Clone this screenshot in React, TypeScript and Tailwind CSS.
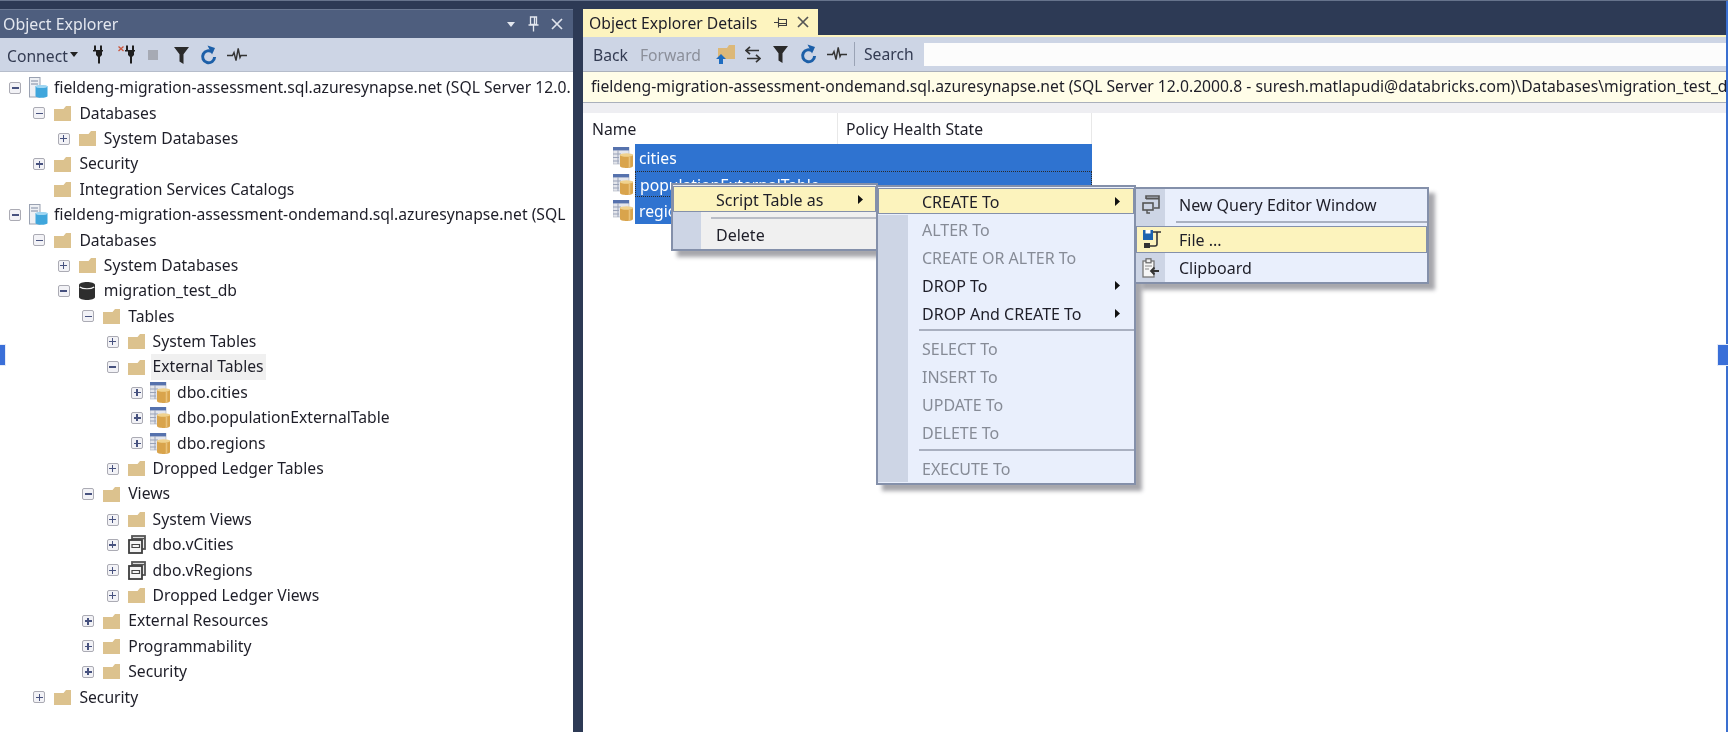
import type { ReactNode } from "react";

type TreeRow = {
  level: number;
  label: string;
  icon: "server" | "folder" | "db" | "table" | "view";
  box?: "plus" | "minus";
  hover?: boolean;
};

const TREE: TreeRow[] = [
  { level: 0, label: "fieldeng-migration-assessment.sql.azuresynapse.net (SQL Server 12.0.", icon: "server", box: "minus" },
  { level: 1, label: "Databases", icon: "folder", box: "minus" },
  { level: 2, label: "System Databases", icon: "folder", box: "plus" },
  { level: 1, label: "Security", icon: "folder", box: "plus" },
  { level: 1, label: "Integration Services Catalogs", icon: "folder" },
  { level: 0, label: "fieldeng-migration-assessment-ondemand.sql.azuresynapse.net (SQL", icon: "server", box: "minus" },
  { level: 1, label: "Databases", icon: "folder", box: "minus" },
  { level: 2, label: "System Databases", icon: "folder", box: "plus" },
  { level: 2, label: "migration_test_db", icon: "db", box: "minus" },
  { level: 3, label: "Tables", icon: "folder", box: "minus" },
  { level: 4, label: "System Tables", icon: "folder", box: "plus" },
  { level: 4, label: "External Tables", icon: "folder", box: "minus", hover: true },
  { level: 5, label: "dbo.cities", icon: "table", box: "plus" },
  { level: 5, label: "dbo.populationExternalTable", icon: "table", box: "plus" },
  { level: 5, label: "dbo.regions", icon: "table", box: "plus" },
  { level: 4, label: "Dropped Ledger Tables", icon: "folder", box: "plus" },
  { level: 3, label: "Views", icon: "folder", box: "minus" },
  { level: 4, label: "System Views", icon: "folder", box: "plus" },
  { level: 4, label: "dbo.vCities", icon: "view", box: "plus" },
  { level: 4, label: "dbo.vRegions", icon: "view", box: "plus" },
  { level: 4, label: "Dropped Ledger Views", icon: "folder", box: "plus" },
  { level: 3, label: "External Resources", icon: "folder", box: "plus" },
  { level: 3, label: "Programmability", icon: "folder", box: "plus" },
  { level: 3, label: "Security", icon: "folder", box: "plus" },
  { level: 1, label: "Security", icon: "folder", box: "plus" },
];

function FolderIcon() {
  return (
    <svg width="17" height="15" viewBox="0 0 17 15" className="shrink-0">
      <path d="M0 3h9.5L12 0h5v15H0z" fill="#dcc28e" />
    </svg>
  );
}

function TableIcon() {
  return (
    <svg width="20" height="21" viewBox="0 0 20 21" className="shrink-0">
      <rect x="0" y="0" width="16" height="17" fill="#e4e6ec" stroke="#a9afbd" strokeWidth="0.6" />
      <rect x="0" y="0" width="16" height="3.4" fill="#5672ad" />
      <path d="M0 7h8M0 10.5h6M0 14h6M5 3v14" stroke="#9aa3b8" strokeWidth="1" />
      <path d="M7 8c0-1.5 13-1.5 13 0v11c0 2.6-13 2.6-13 0z" fill="#d9a44c" />
      <ellipse cx="13.5" cy="8" rx="6.5" ry="1.8" fill="#f0d28e" />
      <path d="M16.5 10v10" stroke="#eac27a" strokeWidth="1.6" />
    </svg>
  );
}

function ServerIcon() {
  return (
    <svg width="19" height="21" viewBox="0 0 19 21" className="shrink-0">
      <rect x="0.5" y="0.5" width="10.5" height="19.5" fill="#eef0f4" stroke="#9aa2b2" />
      <path d="M2 4h7M2 7h7" stroke="#7f8aa2" strokeWidth="1.2" />
      <path d="M6.5 9.5c0-1.4 12-1.4 12 0V19c0 2.4-12 2.4-12 0z" fill="#3fa6dc" />
      <ellipse cx="12.5" cy="9.5" rx="6" ry="1.6" fill="#9fd6f2" />
    </svg>
  );
}

function DbIcon() {
  return (
    <svg width="16" height="18" viewBox="0 0 16 18" className="shrink-0">
      <path d="M0 3c0-4 16-4 16 0v12c0 4-16 4-16 0z" fill="#2e2e2e" />
      <path d="M0.8 5c3 2.4 11.4 2.4 14.4 0" stroke="#f4f4f4" strokeWidth="1.1" fill="none" />
    </svg>
  );
}

function ViewIcon() {
  return (
    <svg width="18" height="19" viewBox="0 0 18 19" className="shrink-0">
      <rect x="4" y="1" width="13" height="13" fill="#ececec" stroke="#555" strokeWidth="1.8" />
      <path d="M4 3.6h13" stroke="#555" strokeWidth="1.4" />
      <rect x="1" y="5" width="13" height="13" fill="#f4f4f4" stroke="#3d3d3d" strokeWidth="1.8" />
      <path d="M4 9.5h7.5v3H4z" fill="none" stroke="#444" strokeWidth="1.2" />
    </svg>
  );
}

function ExpandBox({ kind }: { kind?: "plus" | "minus" }) {
  if (!kind) return <span className="w-3 h-3 shrink-0" />;
  return (
    <span className="w-3 h-3 shrink-0 rounded-[2px] border border-[#ababb4] bg-[#f2f2f6] flex items-center justify-center relative">
      <span className="w-[7px] h-[1.4px] bg-[#47527f]" />
      {kind === "plus" && <span className="absolute w-[1.4px] h-[7px] bg-[#47527f]" />}
    </span>
  );
}

function TreeIcon({ icon }: { icon: TreeRow["icon"] }) {
  if (icon === "server") return <ServerIcon />;
  if (icon === "db") return <DbIcon />;
  if (icon === "table") return <span className="-ml-[2px]"><TableIcon /></span>;
  if (icon === "view") return <ViewIcon />;
  return <FolderIcon />;
}

function Plug({ x }: { x?: boolean }) {
  return (
    <svg width="20" height="19" viewBox="0 0 20 19" className="shrink-0">
      {x && <path d="M0.5 1.5l5 4.5M5.5 1.5l-5 4.5" stroke="#c9573f" strokeWidth="1.4" />}
      <path d="M9 0.5v5M15 0.5v5" stroke="#1e1e1e" strokeWidth="2" />
      <path d="M7 5h10v1.6h-1V10l-2 2v6.5h-2V12l-2-2V6.6H7z" fill="#1e1e1e" />
    </svg>
  );
}

function Filter() {
  return (
    <svg width="15" height="18" viewBox="0 0 15 18" className="shrink-0">
      <path d="M0 1h15L9.5 8.2V18L5.5 15.6V8.2z" fill="#2a2a2a" />
    </svg>
  );
}

function Refresh() {
  return (
    <svg width="17" height="20" viewBox="0 0 17 20" className="shrink-0">
      <path d="M12.5 7.2A6 6 0 1 0 14.6 12" fill="none" stroke="#1c5fa8" strokeWidth="3" />
      <path d="M7.5 0.5l7.5 2.5-3 6.5z" fill="#1c5fa8" />
    </svg>
  );
}

function Pulse() {
  return (
    <svg width="20" height="16" viewBox="0 0 20 16" className="shrink-0">
      <path d="M0 8.5h5.5l1.5-3 2 8 2.2-12 1.8 9 1-2H20" fill="none" stroke="#333" strokeWidth="1.4" />
    </svg>
  );
}

function FolderUp() {
  return (
    <svg width="19" height="19" viewBox="0 0 19 19" className="shrink-0">
      <path d="M2 3h9l2-3h6v14H2z" fill="#dcb878" />
      <path d="M5 9l5 5H7v5H3v-5H0z" fill="#1d6cc0" />
    </svg>
  );
}

function Swap() {
  return (
    <svg width="16" height="17" viewBox="0 0 16 17" className="shrink-0">
      <path d="M1 4.5h13M5 0.8L1 4.5l4 3.7M15 12.5H2M11 8.8l4 3.7-4 3.7" fill="none" stroke="#333" strokeWidth="1.7" />
    </svg>
  );
}

function Caret({ className }: { className?: string }) {
  return (
    <svg width="8" height="5" viewBox="0 0 8 5" className={className}>
      <path d="M0 0h8L4 5z" fill="currentColor" />
    </svg>
  );
}

function PinIcon({ color }: { color: string }) {
  return (
    <svg width="11" height="16" viewBox="0 0 11 16" className="shrink-0">
      <path d="M2.5 1h6v7.5h-6zM6.5 1v7.5M0.5 9h10M5.5 9v6.5" fill="none" stroke={color} strokeWidth="1.3" />
    </svg>
  );
}

function SidePin() {
  return (
    <svg width="13" height="11" viewBox="0 0 13 11" className="shrink-0">
      <path d="M4.5 2.5h8v6h-8zM4.5 6.5h8M4.5 0.5v10M0 5.5h4.5" fill="none" stroke="#3f3f3f" strokeWidth="1.1" />
    </svg>
  );
}

function CloseX({ color }: { color: string }) {
  return (
    <svg width="12" height="12" viewBox="0 0 12 12" className="shrink-0">
      <path d="M1 1l10 10M11 1L1 11" stroke={color} strokeWidth="1.7" />
    </svg>
  );
}

function MenuArrow() {
  return (
    <svg width="5" height="9" viewBox="0 0 5 9" className="shrink-0">
      <path d="M0 0l5 4.5L0 9z" fill="#111" />
    </svg>
  );
}

function QueryIcon() {
  return (
    <svg width="18" height="19" viewBox="0 0 18 19">
      <path d="M4 4V1h13v12h-5" fill="none" stroke="#555" strokeWidth="1.6" />
      <path d="M4 3.5h13" stroke="#555" strokeWidth="2" />
      <rect x="1" y="8" width="10" height="7" fill="none" stroke="#555" strokeWidth="1.6" />
      <path d="M5 15v3h3" fill="none" stroke="#555" strokeWidth="1.4" />
    </svg>
  );
}

function FileIcon() {
  return (
    <svg width="18" height="19" viewBox="0 0 18 19">
      <rect x="0" y="0" width="10" height="10" fill="#1d63b0" />
      <rect x="2.5" y="0" width="5" height="3.5" fill="#fff" />
      <path d="M10 2h8M14 2v12q0 2-2 2H6" fill="none" stroke="#333" strokeWidth="1.6" />
      <rect x="1" y="13" width="6" height="5" fill="#333" />
    </svg>
  );
}

function ClipboardIcon() {
  return (
    <svg width="17" height="20" viewBox="0 0 17 20">
      <rect x="1" y="3" width="11" height="16" fill="#f6f6f6" stroke="#777" strokeWidth="1.3" />
      <rect x="4" y="0.8" width="5" height="4" fill="#eee" stroke="#666" strokeWidth="1.2" />
      <path d="M3 8h7M3 11h4" stroke="#888" />
      <path d="M17 13H9M12.5 9.5L9 13l3.5 3.5" fill="none" stroke="#333" strokeWidth="1.8" />
    </svg>
  );
}

function MenuRow({
  gutterW,
  height = "h-[28px]",
  disabled,
  arrow,
  icon,
  children,
}: {
  gutterW: string;
  height?: string;
  disabled?: boolean;
  arrow?: boolean;
  icon?: ReactNode;
  children: ReactNode;
}) {
  return (
    <div className={`flex items-stretch ${height}`}>
      <div className={`flex items-center justify-center shrink-0 bg-[#cdd5e5] ${gutterW}`}>{icon}</div>
      <div
        className={`flex-1 flex items-center pl-[14px] pr-[14px] ${
          disabled ? "text-[#868b96]" : "text-[#1e1e28]"
        }`}
      >
        <span className="flex-1 whitespace-nowrap pt-[1px]">{children}</span>
        {arrow && <MenuArrow />}
      </div>
    </div>
  );
}

function MenuSeparator({ gutterW, height, offset }: { gutterW: string; height: string; offset: string }) {
  return (
    <div className={`flex ${height}`}>
      <div className={`bg-[#cdd5e5] ${gutterW}`} />
      <div className={`flex-1 ml-[11px] h-[2px] bg-[#a9b0c0] ${offset}`} />
    </div>
  );
}

export default function App() {
  return (
    <div className="relative w-[1728px] h-[732px] overflow-hidden flex bg-[#2d3a55] text-[15.7px] text-[#1e1e28] [font-family:'Noto_Sans',sans-serif] border-t border-[#66738c] blur-[0.4px]">
      {/* Object Explorer */}
      <div className="w-[573px] shrink-0 pt-[8px] flex flex-col">
        <div className="h-[29px] bg-[#4e5e7e] border-t border-[#6a7892] flex items-center pl-[3px] pr-[10px] text-[#e3e7ef]">
          <span className="flex-1 text-[15.9px] pt-[2px]">Object Explorer</span>
          <Caret className="text-[#e3e7ef] mr-[13px]" />
          <PinIcon color="#e3e7ef" />
          <span className="w-[12px]" />
          <CloseX color="#dfe3ec" />
        </div>
        <div className="h-[34px] bg-[#cdd5e5] border-b border-[#b6bdcb] flex items-center pl-[7px]">
          <span className="text-[#333b52] pt-[5px]">Connect</span>
          <Caret className="text-[#222] ml-[2px] mr-[8px]" />
          <Plug />
          <span className="w-[12px]" />
          <Plug x />
          <span className="w-[10px]" />
          <span className="w-[10px] h-[10px] bg-[#a6aab4]" />
          <span className="w-[16px]" />
          <Filter />
          <span className="w-[11px]" />
          <Refresh />
          <span className="w-[10px]" />
          <Pulse />
        </div>
        <div className="flex-1 bg-white pt-[3.2px] overflow-hidden">
          {TREE.map((row, i) => (
            <div
              key={i}
              className="h-[25.4px] flex items-center whitespace-nowrap"
              style={{ paddingLeft: 9 + row.level * 24.4 }}
            >
              <ExpandBox kind={row.box} />
              <span className={`flex items-center justify-start w-[22px] shrink-0 ${row.level === 0 ? "ml-[8px]" : "ml-[9px]"}`}>
                <TreeIcon icon={row.icon} />
              </span>
              <span className={`ml-[1px] px-[2px] leading-[25.4px] ${row.hover ? "bg-[#f0f0f0]" : ""}`}>
                {row.label}
              </span>
            </div>
          ))}
        </div>
      </div>

      {/* Object Explorer Details */}
      <div className="flex-1 min-w-0 ml-[10px] pt-[8px] flex flex-col border-r-2 border-[#3a6fd0]">
        <div className="h-[26px] flex">
          <div className="w-[235px] bg-[#fdf4bf] flex items-center pl-[6px] pr-[9px] whitespace-nowrap">
            <span className="flex-1 pt-[3px]">Object Explorer Details</span>
            <SidePin />
            <span className="w-[10px]" />
            <CloseX color="#555" />
          </div>
        </div>
        <div className="h-[2px] bg-[#fdf4bf]" />
        <div className="h-[34px] bg-[#cdd5e5] flex items-center pl-[10px]">
          <span className="text-[#333b52] pt-[4px]">Back</span>
          <span className="ml-[12px] pt-[4px] text-[#8b8f9a]">Forward</span>
          <span className="w-[15px]" />
          <FolderUp />
          <span className="w-[10px]" />
          <Swap />
          <span className="w-[12px]" />
          <Filter />
          <span className="w-[12px]" />
          <Refresh />
          <span className="w-[10px]" />
          <Pulse />
          <span className="ml-[7px] w-px h-[24px] bg-[#9aa3b5]" />
          <span className="ml-[9px] pt-[1px] text-[#333b52]">Search</span>
          <span className="ml-[10px] flex-1 h-[23px] bg-[#fcfcfc]" />
        </div>
        <div className="h-[32px] bg-[#fffde8] border-y border-[#aab0bb] flex items-center pl-[8px] whitespace-nowrap overflow-hidden">
          fieldeng-migration-assessment-ondemand.sql.azuresynapse.net (SQL Server 12.0.2000.8 - suresh.matlapudi@databricks.com)\Databases\migration_test_db
        </div>
        <div className="h-[10px] bg-[#eeeef2]" />
        <div className="flex-1 bg-white">
          <div className="h-[31px] flex items-center w-[509px]">
            <span className="w-[255px] pl-[9px] pt-[3px] h-full flex items-center border-r border-[#e8e8e8]">Name</span>
            <span className="flex-1 pl-[8px] pt-[3px] h-full flex items-center border-r border-[#e8e8e8]">Policy Health State</span>
          </div>
          {["cities", "populationExternalTable", "regions"].map((name, i) => (
            <div key={name} className="h-[26.7px] flex items-center pl-[30px]">
              <span className="w-[22px] shrink-0">
                <TableIcon />
              </span>
              <span
                className={`w-[457px] h-full bg-[#2f73d0] text-white pl-[4px] pt-[3px] flex items-center ${
                  i === 1 ? "border border-dotted border-[#2a2a2a]" : ""
                }`}
              >
                {name}
              </span>
            </div>
          ))}
        </div>
      </div>

      {/* splitter handles */}
      <span className="absolute left-0 top-[344px] w-[5px] h-[20px] bg-[#3a6fd8] outline outline-1 outline-[#e6ecf8]" />
      <span className="absolute right-0 top-[344px] w-[10px] h-[20px] bg-[#3a6fd8] outline outline-1 outline-[#e6ecf8]" />

      {/* context menus */}
      <div className="absolute left-[671px] top-[182px] w-[207px] h-[68px] border-2 border-[#8490aa] bg-[#f0f0f0] text-[16px] shadow-[6px_6px_4px_rgba(60,60,70,0.45)]">
        <div className="h-[26px] mt-[1px] flex items-center bg-[#fcf3bd] border border-[#8490aa] pl-[42px] pr-[12px]">
          <span className="flex-1 pt-[1px]">Script Table as</span>
          <MenuArrow />
        </div>
        <div className="h-[5px] flex">
          <div className="w-[28px] bg-[#cdd5e5]" />
        </div>
        <div className="h-[2px] flex">
          <div className="w-[28px] bg-[#cdd5e5]" />
          <div className="flex-1 ml-[10px] bg-[#b9bdc6]" />
        </div>
        <div className="h-[30px] flex">
          <div className="w-[28px] bg-[#cdd5e5]" />
          <span className="pl-[15px] pt-[1px] flex items-center">Delete</span>
        </div>
      </div>

      <div className="absolute left-[876px] top-[184px] w-[260px] border-2 border-[#8490aa] bg-[#e9effc] pb-[1px] text-[16px] shadow-[6px_6px_4px_rgba(60,60,70,0.45)]">
        <div className="h-[28px] py-[1px]">
          <div className="h-[26px] flex items-center bg-[#fcf3bd] border border-[#8490aa] pl-[43px] pr-[13px]">
            <span className="flex-1 pt-[1px]">CREATE To</span>
            <MenuArrow />
          </div>
        </div>
        <MenuRow gutterW="w-[30px]" disabled>ALTER To</MenuRow>
        <MenuRow gutterW="w-[30px]" disabled>CREATE OR ALTER To</MenuRow>
        <MenuRow gutterW="w-[30px]" arrow>DROP To</MenuRow>
        <MenuRow gutterW="w-[30px]" arrow>DROP And CREATE To</MenuRow>
        <MenuSeparator gutterW="w-[30px]" height="h-[7px]" offset="mt-[2px]" />
        <MenuRow gutterW="w-[30px]" disabled>SELECT To</MenuRow>
        <MenuRow gutterW="w-[30px]" disabled>INSERT To</MenuRow>
        <MenuRow gutterW="w-[30px]" disabled>UPDATE To</MenuRow>
        <MenuRow gutterW="w-[30px]" disabled>DELETE To</MenuRow>
        <MenuSeparator gutterW="w-[30px]" height="h-[8px]" offset="mt-[3px]" />
        <MenuRow gutterW="w-[30px]" disabled>EXECUTE To</MenuRow>
      </div>

      <div className="absolute left-[1136px] top-[186px] w-[293px] border-2 border-l-0 border-[#8490aa] bg-[#e9effc] text-[16px] shadow-[6px_6px_4px_rgba(60,60,70,0.45)]">
        <MenuRow gutterW="w-[29px]" height="h-[30px]" icon={<QueryIcon />}>New Query Editor Window</MenuRow>
        <MenuSeparator gutterW="w-[29px]" height="h-[7px]" offset="mt-[2px]" />
        <div className="h-[27px] flex items-center bg-[#fcf3bd] border border-[#8490aa] whitespace-nowrap">
          <span className="w-[29px] flex justify-center shrink-0"><FileIcon /></span>
          <span className="pl-[13px]">File ...</span>
        </div>
        <MenuRow gutterW="w-[29px]" height="h-[29px]" icon={<ClipboardIcon />}>Clipboard</MenuRow>
      </div>
    </div>
  );
}
